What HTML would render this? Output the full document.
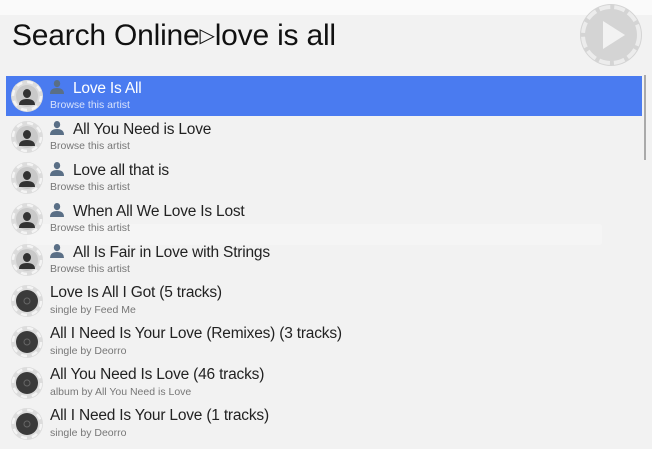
<!DOCTYPE html>
<html><head><meta charset="utf-8"><style>
body{margin:0;width:652px;height:449px;background:#f2f2f2;font-family:"Liberation Sans",Arial,sans-serif;overflow:hidden;position:relative}
.top{position:absolute;left:0;top:0;width:652px;height:15px;background:#fafafa}
h1{position:absolute;left:12px;top:19px;margin:0;font-weight:normal;font-size:30px;color:#111;letter-spacing:-0.2px}
.row{position:absolute;left:6px;width:636px;height:40px}
.row.sel{background:#4a7bf0}
.ic{position:absolute;left:5px;top:4px}
.t{position:absolute;left:44px;top:3px;font-size:15.5px;color:#222;white-space:nowrap;letter-spacing:-0.2px}
.s{position:absolute;left:44px;top:23px;font-size:10.5px;color:#777;white-space:nowrap}
.sel .t{color:#fff}.sel .s{color:#d8e2fb}
.pi{display:inline-block;vertical-align:-1px;margin-right:9px}
.sb{position:absolute;left:644px;top:75px;width:2px;height:85px;background:#aaa}
.ghost{position:absolute;left:27px;top:224px;width:575px;height:21px;background:#f5f5f5;border-radius:3px}
</style></head><body>
<svg width="0" height="0" style="position:absolute"><defs>
<g id="ring"><circle cx="16" cy="16" r="16" fill="#dcdcdc"/><circle cx="16" cy="16" r="14" fill="none" stroke="#f4f4f4" stroke-width="2.5" stroke-dasharray="6 5"/></g>
<g id="art"><use href="#ring"/><circle cx="16" cy="16" r="11" fill="#c9c9c9"/><path d="M16 9a4 4.5 0 1 1 0 9a4 4.5 0 1 1 0-9zM8 25q0-6 8-6q8 0 8 6z" fill="#333"/></g>
<g id="alb"><use href="#ring"/><circle cx="16" cy="16" r="11" fill="#3a3a3a"/><circle cx="16" cy="16" r="3" fill="none" stroke="#666" stroke-width="1"/></g>
<g id="pp"><path d="M7 1a3.2 3.6 0 1 1 0 7.2a3.2 3.6 0 1 1 0-7.2zM0 15q0-6 7-6q7 0 7 6z" fill="#5a6f86"/></g>
</defs></svg>
<div class="top"></div>
<h1>Search Online<span style="font-size:20px;vertical-align:3px">&#9655;</span>love is all</h1>
<svg style="position:absolute;left:579px;top:3px" width="64" height="64"><circle cx="32" cy="32" r="31" fill="#d4d4d4"/><circle cx="32" cy="32" r="28" fill="none" stroke="#ececec" stroke-width="4" stroke-dasharray="11 4"/><path d="M24 18L46 32L24 46z" fill="#f2f2f2"/></svg>
<div class="ghost"></div>
<div class="sb"></div>

<div class="row sel" style="top:76px"><svg class="ic" width="32" height="32"><use href="#art"/></svg><div class="t"><svg class="pi" width="14" height="15"><use href="#pp"/></svg>Love Is All</div><div class="s">Browse this artist</div></div>
<div class="row" style="top:117px"><svg class="ic" width="32" height="32"><use href="#art"/></svg><div class="t"><svg class="pi" width="14" height="15"><use href="#pp"/></svg>All You Need is Love</div><div class="s">Browse this artist</div></div>
<div class="row" style="top:158px"><svg class="ic" width="32" height="32"><use href="#art"/></svg><div class="t"><svg class="pi" width="14" height="15"><use href="#pp"/></svg>Love all that is</div><div class="s">Browse this artist</div></div>
<div class="row" style="top:199px"><svg class="ic" width="32" height="32"><use href="#art"/></svg><div class="t"><svg class="pi" width="14" height="15"><use href="#pp"/></svg>When All We Love Is Lost</div><div class="s">Browse this artist</div></div>
<div class="row" style="top:240px"><svg class="ic" width="32" height="32"><use href="#art"/></svg><div class="t"><svg class="pi" width="14" height="15"><use href="#pp"/></svg>All Is Fair in Love with Strings</div><div class="s">Browse this artist</div></div>
<div class="row" style="top:281px"><svg class="ic" width="32" height="32"><use href="#alb"/></svg><div class="t">Love Is All I Got (5 tracks)</div><div class="s">single by Feed Me</div></div>
<div class="row" style="top:322px"><svg class="ic" width="32" height="32"><use href="#alb"/></svg><div class="t">All I Need Is Your Love (Remixes) (3 tracks)</div><div class="s">single by Deorro</div></div>
<div class="row" style="top:363px"><svg class="ic" width="32" height="32"><use href="#alb"/></svg><div class="t">All You Need Is Love (46 tracks)</div><div class="s">album by All You Need is Love</div></div>
<div class="row" style="top:404px"><svg class="ic" width="32" height="32"><use href="#alb"/></svg><div class="t">All I Need Is Your Love (1 tracks)</div><div class="s">single by Deorro</div></div>
</body></html>
